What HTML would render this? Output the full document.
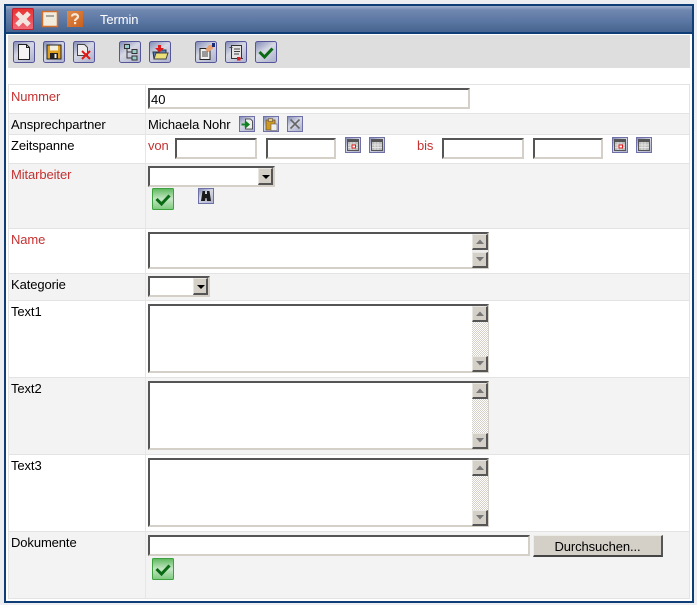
<!DOCTYPE html>
<html>
<head>
<meta charset="utf-8">
<title>Termin</title>
<style>
html,body{margin:0;padding:0;background:#eceef2;}
body{position:relative;width:697px;height:605px;overflow:hidden;font-family:"Liberation Sans",sans-serif;font-size:13px;color:#000;}
div{position:absolute;box-sizing:border-box;}
.t{white-space:nowrap;line-height:14px;letter-spacing:-.1px;}
.r{color:#c43232;}
.row{left:8px;width:682px;border:1px solid #e3e3e3;}
.g{background:#f3f3f3;}
.w{background:#fff;}
.inp{background:#fff;border-style:solid;border-width:2px;border-color:#555 #d4d0c8 #d4d0c8 #555;}
.sb{width:16px;height:16px;background:#d4d0c8;border-style:solid;border-width:1px 2px 2px 1px;border-color:#e8e6e0 #555 #555 #e8e6e0;}
.dith{width:16px;background-color:#eee;background-image:repeating-conic-gradient(#d4d0c8 0 25%,#fff 0 50%);background-size:2px 2px;}
svg{position:absolute;left:0;top:0;}
</style>
</head>
<body>
<div style="left:4px;top:4px;width:690px;height:599px;background:#fff;border:2px solid #0f3d75;"></div>
<div style="left:6px;top:6px;width:686px;height:28px;background:linear-gradient(#9fb0cc 0,#7088b0 4px,#5f7aa6 50%,#46648f 100%);border-bottom:2px solid #0f3d75;"></div>
<div class="t" style="left:100px;top:13px;color:#fff;">Termin</div>
<div style="left:8px;top:35px;width:682px;height:33px;background:#dedede;"></div>

<div class="row w" style="top:84px;height:30px;"></div>
<div class="row g" style="top:113px;height:22px;"></div>
<div class="row w" style="top:134px;height:30px;"></div>
<div class="row g" style="top:163px;height:66px;"></div>
<div class="row w" style="top:228px;height:46px;"></div>
<div class="row g" style="top:273px;height:28px;"></div>
<div class="row w" style="top:300px;height:78px;"></div>
<div class="row g" style="top:377px;height:78px;"></div>
<div class="row w" style="top:454px;height:78px;"></div>
<div class="row g" style="top:531px;height:68px;"></div>
<div style="left:145px;top:84px;width:1px;height:515px;background:#e6e6e6;"></div>

<div class="t r" style="left:11px;top:90px;">Nummer</div>
<div class="t" style="left:11px;top:118px;">Ansprechpartner</div>
<div class="t" style="left:11px;top:139px;">Zeitspanne</div>
<div class="t r" style="left:11px;top:168px;">Mitarbeiter</div>
<div class="t r" style="left:11px;top:233px;">Name</div>
<div class="t" style="left:11px;top:278px;">Kategorie</div>
<div class="t" style="left:11px;top:305px;">Text1</div>
<div class="t" style="left:11px;top:382px;">Text2</div>
<div class="t" style="left:11px;top:459px;">Text3</div>
<div class="t" style="left:11px;top:536px;">Dokumente</div>

<div class="inp" style="left:148px;top:88px;width:322px;height:21px;"></div>
<div class="t" style="left:151px;top:93px;letter-spacing:0;">40</div>
<div class="t" style="left:148px;top:118px;">Michaela Nohr</div>

<div class="t r" style="left:148px;top:139px;">von</div>
<div class="inp" style="left:175px;top:138px;width:82px;height:21px;"></div>
<div class="inp" style="left:266px;top:138px;width:70px;height:21px;"></div>
<div class="t r" style="left:417px;top:139px;">bis</div>
<div class="inp" style="left:442px;top:138px;width:82px;height:21px;"></div>
<div class="inp" style="left:533px;top:138px;width:70px;height:21px;"></div>

<div class="inp" style="left:148px;top:166px;width:127px;height:21px;"></div>
<div class="sb" style="left:258px;top:168px;width:15px;height:17px;"></div>
<div class="inp" style="left:148px;top:276px;width:62px;height:21px;"></div>
<div class="sb" style="left:193px;top:278px;width:15px;height:17px;"></div>

<div class="inp" style="left:148px;top:232px;width:341px;height:37px;"></div>
<div class="sb" style="left:472px;top:234px;"></div>
<div class="sb" style="left:472px;top:252px;"></div>
<div style="left:472px;top:250px;width:16px;height:2px;background:#eee;"></div>

<div class="inp" style="left:148px;top:304px;width:341px;height:69px;"></div>
<div class="dith" style="left:472px;top:322px;height:34px;"></div>
<div class="sb" style="left:472px;top:306px;"></div>
<div class="sb" style="left:472px;top:356px;"></div>

<div class="inp" style="left:148px;top:381px;width:341px;height:69px;"></div>
<div class="dith" style="left:472px;top:399px;height:34px;"></div>
<div class="sb" style="left:472px;top:383px;"></div>
<div class="sb" style="left:472px;top:433px;"></div>

<div class="inp" style="left:148px;top:458px;width:341px;height:69px;"></div>
<div class="dith" style="left:472px;top:476px;height:34px;"></div>
<div class="sb" style="left:472px;top:460px;"></div>
<div class="sb" style="left:472px;top:510px;"></div>

<div class="inp" style="left:148px;top:535px;width:382px;height:21px;"></div>
<div class="t" style="left:533px;top:535px;width:130px;height:22px;background:#d4d0c8;border-style:solid;border-width:1px 2px 2px 1px;border-color:#eeece6 #555 #444 #eeece6;text-align:center;line-height:22px;">Durchsuchen...</div>

<svg width="697" height="605" viewBox="0 0 697 605" xmlns="http://www.w3.org/2000/svg">
<defs>
<linearGradient id="b" x1="0" y1="0" x2="0.7" y2="1"><stop offset="0" stop-color="#7f88b4"/><stop offset=".5" stop-color="#d6d8e4"/><stop offset="1" stop-color="#b4b8d0"/></linearGradient>
<linearGradient id="gr" x1="0" y1="0" x2="0" y2="1"><stop offset="0" stop-color="#5cb85c"/><stop offset=".5" stop-color="#c4e6c4"/><stop offset="1" stop-color="#7cc87c"/></linearGradient>
<linearGradient id="re" x1="0" y1="0" x2="0" y2="1"><stop offset="0" stop-color="#e83030"/><stop offset="1" stop-color="#f06a7a"/></linearGradient>
<linearGradient id="or" x1="0" y1="0" x2="1" y2="1"><stop offset="0" stop-color="#e08a4a"/><stop offset="1" stop-color="#c8601e"/></linearGradient>
<g id="cb"><rect x=".5" y=".5" width="21" height="21" rx="2" fill="url(#b)" stroke="#55559a"/></g>
<g id="sb"><rect x=".5" y=".5" width="15" height="15" fill="url(#b)" stroke="#7070a8"/></g>
<g id="chk"><rect x=".5" y=".5" width="21" height="21" rx="1" fill="url(#gr)" stroke="#3da23d"/><path d="M4.500 11l5 5 8-8.500" fill="none" stroke="#0a6a14" stroke-width="3"/></g>
<g id="cal"><use href="#sb"/><rect x="2.500" y="2.500" width="11" height="11" fill="#bcbcbc" stroke="#555"/><rect x="2.500" y="2.500" width="11" height="2.500" fill="#555"/><path d="M3 8h10M3 10.500h10M6 5v8M9 5v8" stroke="#eee" stroke-width=".7"/></g>
</defs>

<!-- title icons -->
<rect x="12.500" y="8.500" width="21" height="21" rx="1.500" fill="url(#re)" stroke="#c02030"/>
<path d="M17 13l12 12M29 13L17 25" stroke="#f4e4e0" stroke-width="5"/>
<rect x="42.500" y="11.500" width="15" height="15" fill="#f2ecdc" stroke="#d0702c" stroke-width="1.500"/>
<rect x="46" y="15" width="8" height="2" fill="#a8a8a0"/>
<rect x="67" y="11" width="16" height="16" fill="url(#or)"/>
<path d="M72 16.500c0-3 6-3 6 0 0 2.500-3 2-3 4.500" fill="none" stroke="#f6e8d8" stroke-width="2.200"/>
<rect x="74" y="22" width="2.200" height="2.200" fill="#f6e8d8"/>

<!-- toolbar -->
<g transform="translate(13 41)"><use href="#cb"/><path d="M5.500 3.500h8l3 3v12h-11z" fill="#f4f4f4" stroke="#222"/><path d="M13.500 3.500v3h3" fill="none" stroke="#222"/></g>
<g transform="translate(43 41)"><use href="#cb"/><rect x="4" y="4" width="14" height="14" fill="#e0a020" stroke="#222"/><rect x="7" y="4.500" width="8" height="5" fill="#f4f0e0"/><rect x="7" y="12" width="8" height="6" fill="#222"/><rect x="11.500" y="13" width="2" height="4" fill="#eee"/></g>
<g transform="translate(73 41)"><use href="#cb"/><path d="M4.500 3.500h7l3 3v8h-10z" fill="#eee" stroke="#444"/><path d="M9 10l8 8M17 10l-8 8" stroke="#e01818" stroke-width="2"/></g>
<g transform="translate(119 41)"><use href="#cb"/><path d="M8 6v11h5M8 11h5" fill="none" stroke="#333"/><rect x="5.500" y="3.500" width="5" height="4" fill="#9cc" stroke="#333"/><rect x="13" y="8.500" width="5" height="4" fill="#9cc" stroke="#333"/><rect x="13" y="15" width="5" height="4" fill="#9cc" stroke="#333"/></g>
<g transform="translate(149 41)"><use href="#cb"/><path d="M4 11h6l1-2h6v9H5z" fill="#5a82b8" stroke="#234"/><path d="M5 18l2-6h12l-2 6z" fill="#ece07a" stroke="#444"/><path d="M9 4h3v3h3l-4.500 4.500L6 7h3z" fill="#e01818"/></g>
<g transform="translate(195 41)"><use href="#cb"/><rect x="5" y="7.500" width="10" height="11" fill="#eee" stroke="#222"/><path d="M7 11h6M7 13h6M7 15h6" stroke="#444"/><path d="M10 9l4-5h3l1.500 3-5 4z" fill="#e8a070"/><rect x="17" y="2" width="3" height="4" fill="#1c2c78"/></g>
<g transform="translate(225 41)"><use href="#cb"/><path d="M6.500 4.500h10v13h-10z" fill="#e4e4e4" stroke="#333"/><path d="M4.500 6.500h3M15 17.500h3M9 8h6M9 10.500h6M9 13h5" stroke="#444"/><rect x="12" y="16" width="3.500" height="3.500" fill="#e01828"/></g>
<g transform="translate(255 41)"><use href="#cb"/><path d="M4.500 11l5 5 8-8.500" fill="none" stroke="#0a6a14" stroke-width="3"/></g>

<!-- row icons -->
<g transform="translate(239 116)"><use href="#sb"/><path d="M6.500 3h5l2 2v8h-7z" fill="#eee" stroke="#333" stroke-width=".8"/><path d="M2.500 8.500h6M6 5.500l3.500 3-3.500 3" fill="none" stroke="#108020" stroke-width="2"/></g>
<g transform="translate(263 116)"><use href="#sb"/><rect x="3" y="4" width="9" height="10" fill="#d0981c" stroke="#654" stroke-width=".8"/><rect x="5.500" y="2.500" width="4" height="3" fill="#e8d080" stroke="#654" stroke-width=".6"/><rect x="8" y="8" width="6" height="6.500" fill="#eee" stroke="#666" stroke-width=".6"/></g>
<g transform="translate(287 116)"><use href="#sb"/><path d="M3.500 3.500l9 9M12.500 3.500l-9 9" stroke="#666" stroke-width="1.600"/></g>
<g transform="translate(345 137)"><use href="#cal"/><rect x="7" y="8" width="3.500" height="3" fill="#fff" stroke="#e01818"/></g>
<g transform="translate(369 137)"><use href="#cal"/></g>
<g transform="translate(612 137)"><use href="#cal"/><rect x="7" y="8" width="3.500" height="3" fill="#fff" stroke="#e01818"/></g>
<g transform="translate(636 137)"><use href="#cal"/></g>
<g transform="translate(198 188)"><use href="#sb"/><path d="M4.500 3h2.500v3h2V3h2.500l1.500 10h-4l-.5-3h-1l-.5 3H3z" fill="#1a1a1a"/></g>
<g transform="translate(152 188)"><use href="#chk"/></g>
<g transform="translate(152 558)"><use href="#chk"/></g>

<!-- select arrows -->
<path d="M262 175h8l-4 4z" fill="#000"/>
<path d="M197 285h8l-4 4z" fill="#000"/>

<!-- scrollbar arrows -->
<path d="M476 244l4-4.500 4 4.500z M476 257l4 4.500 4-4.500z" fill="#777"/>
<path d="M476 316l4-4.500 4 4.500z M476 361l4 4.500 4-4.500z" fill="#777"/>
<path d="M476 393l4-4.500 4 4.500z M476 438l4 4.500 4-4.500z" fill="#777"/>
<path d="M476 470l4-4.500 4 4.500z M476 515l4 4.500 4-4.500z" fill="#777"/>
</svg>
</body>
</html>
